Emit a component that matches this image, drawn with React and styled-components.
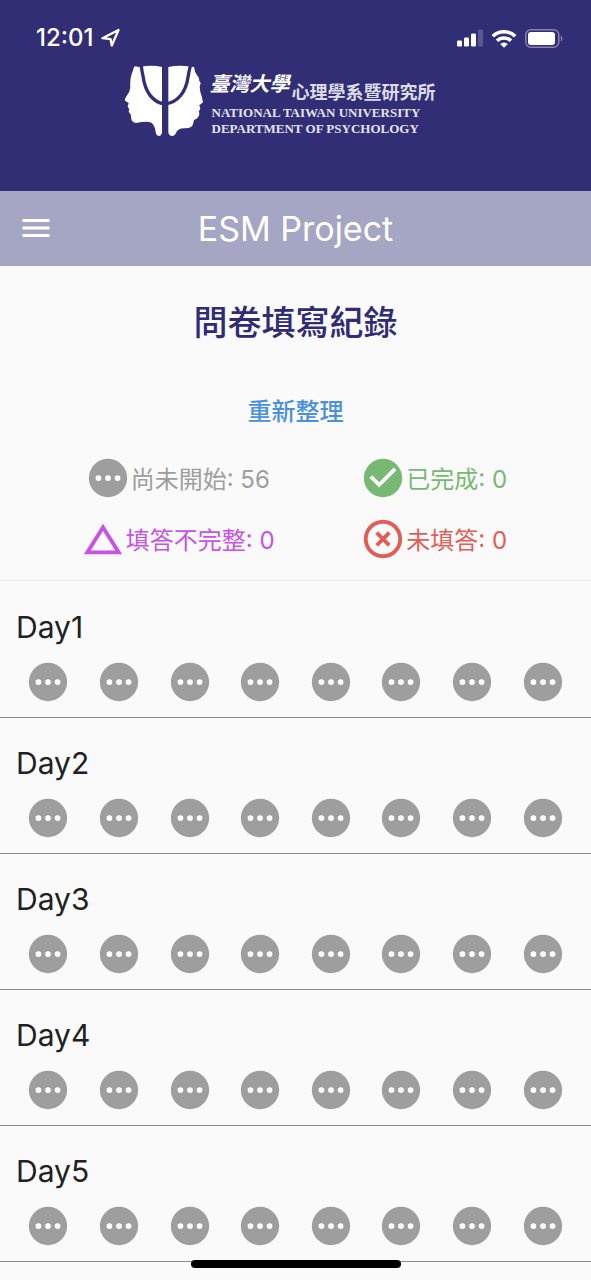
import React from "react";
import styled, { createGlobalStyle } from "styled-components";

const sans = `Inter, "Noto Sans CJK TC", sans-serif`;

const GlobalStyle = createGlobalStyle`
  *, *::before, *::after { box-sizing: border-box; }
  body { margin: 0; background: #fafafa; font-family: ${sans}; }
  h1, h2, h3, p, ul, dl { margin: 0; padding: 0; font-weight: 400; }
  svg { display: block; flex: none; }
`;

const Page = styled.div`
  min-height: 100vh;
  background: #fafafa;
`;

const Header = styled.header`
  height: 191px;
  padding-top: 20px;
  background: #312e75;
  color: #fff;
`;

const StatusBar = styled.div`
  display: flex;
  align-items: center;
  justify-content: space-between;
  height: 36px;
  padding: 0 28px 0 36px;
`;

const StatusGroup = styled.div`
  display: flex;
  align-items: center;
  gap: 8px;
`;

const Clock = styled.time`
  font-size: 24px;
  line-height: 28px;
  font-weight: 500;
`;

const Brand = styled.div`
  display: flex;
  justify-content: center;
  gap: 6px;
  padding: 9px 32px 0 0;
`;

const BrandText = styled.div`
  display: flex;
  flex-direction: column;
  white-space: nowrap;
`;

const BrandChinese = styled.div`
  display: flex;
  align-items: flex-end;
  gap: 2px;
  height: 40px;
`;

const BrandScript = styled.span`
  font-family: "Noto Sans CJK TC", sans-serif;
  font-size: 20px;
  line-height: 36px;
  font-style: italic;
  font-weight: 700;
  height: 40px;
`;

const BrandDept = styled.span`
  font-family: "Noto Sans CJK TC", sans-serif;
  font-size: 18px;
  line-height: 28px;
  font-weight: 700;
  color: #dddce9;
`;

const BrandLatin = styled.span`
  padding-left: 2px;
  font-family: "Liberation Serif", serif;
  font-size: 13px;
  line-height: 16px;
  font-weight: 700;
  color: #e4e3ee;
`;

const AppBar = styled.div`
  display: grid;
  grid-template-columns: 56px 1fr 56px;
  align-items: center;
  height: 75px;
  padding: 0 8px;
  background: #a5a6c4;
  color: #fff;
`;

const MenuButton = styled.button`
  display: grid;
  place-items: center;
  width: 56px;
  height: 56px;
  padding: 0;
  border: 0;
  background: none;
  color: inherit;
`;

const AppTitle = styled.h1`
  font-size: 34px;
  line-height: 40px;
  text-align: center;
`;

const Summary = styled.section`
  display: flex;
  flex-direction: column;
  align-items: center;
  padding-top: 32px;
  border-bottom: 1px solid #ebebeb;
`;

const Heading = styled.h2`
  font-size: 34px;
  line-height: 50px;
  font-weight: 500;
  color: #2f2b74;
`;

const RefreshButton = styled.button`
  margin-top: 46px;
  padding: 0;
  border: 0;
  background: none;
  font-family: ${sans};
  font-size: 24px;
  line-height: 36px;
  font-weight: 500;
  color: #4a90dc;
`;

const Legend = styled.ul`
  display: grid;
  grid-template-columns: 1fr 1fr;
  row-gap: 15px;
  width: 100%;
  padding: 25px 29px 18px 49px;
  list-style: none;
`;

const LegendItem = styled.li`
  display: flex;
  align-items: center;
  justify-content: center;
  height: 46px;
  font-size: 24px;
  font-weight: 400;
  line-height: 36px;
  white-space: nowrap;
  color: ${(p) => p.$color};
`;

const LegendText = styled.span`
  padding-top: 3px;
`;

const DayList = styled.main`
  padding-top: 1px;
`;

const DayRow = styled.section`
  height: 136px;
  padding-top: 25px;
  border-bottom: 1px solid #8c8c8c;
`;

const DayName = styled.h3`
  padding-left: 16px;
  font-size: 30px;
  line-height: 40px;
  color: #212121;
`;

const Slots = styled.div`
  display: grid;
  grid-template-columns: repeat(8, 1fr);
  justify-items: center;
  padding: 12px 13px 0;
`;

const HomeIndicator = styled.div`
  position: fixed;
  left: 50%;
  bottom: 12px;
  width: 210px;
  height: 8px;
  margin-left: -105px;
  border-radius: 4px;
  background: #000;
`;

const Icon = ({ children }) => (
  <svg width="46" height="46" viewBox="0 0 24 24" fill="currentColor" aria-hidden="true">
    {children}
  </svg>
);

const PendingIcon = ({ color = "#9e9e9e" }) => (
  <Icon>
    <circle cx="12" cy="12" r="10" fill={color} />
    <g fill="#fff">
      <circle cx="7" cy="12" r="1.5" />
      <circle cx="12" cy="12" r="1.5" />
      <circle cx="17" cy="12" r="1.5" />
    </g>
  </Icon>
);

const DoneIcon = () => (
  <Icon>
    <circle cx="12" cy="12" r="10" />
    <path d="M10 17l-5-5 1.41-1.41L10 14.17l7.59-7.59L19 8z" fill="#fff" />
  </Icon>
);

const PartialIcon = () => (
  <Icon>
    <path d="M12 7.77 18.39 18H5.61L12 7.77M12 4 2 20h20L12 4z" />
  </Icon>
);

const MissedIcon = () => (
  <Icon>
    <path d="M14.59 8 12 10.59 9.41 8 8 9.41 10.59 12 8 14.59 9.41 16 12 13.41 14.59 16 16 14.59 13.41 12 16 9.41 14.59 8zM12 2C6.47 2 2 6.47 2 12s4.47 10 10 10 10-4.47 10-10S17.53 2 12 2zm0 18c-4.41 0-8-3.59-8-8s3.59-8 8-8 8 3.59 8 8-3.59 8-8 8z" />
  </Icon>
);

const MenuIcon = () => (
  <svg width="28" height="20" viewBox="0 0 28 20" fill="currentColor" aria-hidden="true">
    <path d="M0.500 0h27v3h-27zM0.500 7.500h27v3h-27zM0.500 15h27v3h-27z" />
  </svg>
);

const LocationIcon = () => (
  <svg width="20" height="20" viewBox="0 0 20 20" aria-hidden="true">
    <path d="M1.500 10.200 17.500 2 10.800 17.500 9.600 11.200z" fill="none" stroke="#fff" strokeWidth="2.300" strokeLinejoin="round" />
  </svg>
);

const SignalIcon = () => (
  <svg width="26" height="18" viewBox="0 0 26 18" fill="#fff" aria-hidden="true">
    <rect x="0" y="11.500" width="5" height="6" rx="1.300" />
    <rect x="7" y="8.500" width="5" height="9" rx="1.300" />
    <rect x="14" y="4.500" width="5" height="13" rx="1.300" />
    <rect x="21" y="0.500" width="5" height="17" rx="1.300" opacity="0.200" />
  </svg>
);

const WifiIcon = () => (
  <svg width="26" height="19" viewBox="0 0 26 19" aria-hidden="true">
    <g fill="none" stroke="#fff" strokeWidth="3.600">
      <path d="M1.800 7.300a16 16 0 0 1 22.400 0" />
      <path d="M6 11.800a10 10 0 0 1 14 0" />
    </g>
    <path d="M13 18.800 9.200 15a5.300 5.300 0 0 1 7.600 0z" fill="#fff" />
  </svg>
);

const BatteryIcon = () => (
  <svg width="38" height="19" viewBox="0 0 38 19" aria-hidden="true">
    <rect x="0.800" y="0.800" width="33" height="17.400" rx="5" fill="none" stroke="#8583ad" strokeWidth="1.500" />
    <rect x="3" y="3" width="27" height="13" rx="3" fill="#fff" />
    <path d="M35.800 6.500c2.200.8 2.200 5.200 0 6z" fill="#8583ad" />
  </svg>
);

const HeadsLogo = () => (
  <svg width="80" height="72" viewBox="40 45 240 216" role="img" aria-label="Department emblem">
    <path
      fill="#fff"
      d="M70 51Q75 47 82 51L90 50Q125 44 154 51V246Q153 258 144 258Q136 257 135 246Q133 226 122 218Q110 212 76 219Q64 217 62 207L60 193L54 185L56 178L51 170L54 159L43 152Q41 147 50 134Q57 125 59 113Q57 88 63 72Q67 62 70 51Z"
    />
    <path
      fill="#fff"
      d="M173 51Q205 44 240 50L250 51Q252 68 260 77Q267 84 265 91L270 99L267 110Q268 126 273 139L277 157L266 166L269 176L265 183L266 192Q264 206 250 210L247 223Q243 236 222 235Q200 235 195 251Q190 259 183 258Q174 257 173 247Z"
    />
    <path
      fill="none"
      stroke="#312e75"
      strokeWidth="10"
      d="M91 44Q94 64 97 78C103 125 126 158 163 162C202 158 226 125 232 82Q234 68 240 44"
    />
  </svg>
);

const legend = [
  { label: "尚未開始", count: 56, color: "#9e9e9e", Glyph: PendingIcon },
  { label: "已完成", count: 0, color: "#77b972", Glyph: DoneIcon },
  { label: "填答不完整", count: 0, color: "#c653e6", Glyph: PartialIcon },
  { label: "未填答", count: 0, color: "#e35d57", Glyph: MissedIcon },
];

const days = [1, 2, 3, 4, 5];
const slots = [1, 2, 3, 4, 5, 6, 7, 8];

export default function App() {
  return (
    <Page>
      <GlobalStyle />
      <Header>
        <StatusBar>
          <StatusGroup>
            <Clock>12:01</Clock>
            <LocationIcon />
          </StatusGroup>
          <StatusGroup>
            <SignalIcon />
            <WifiIcon />
            <BatteryIcon />
          </StatusGroup>
        </StatusBar>
        <Brand>
          <HeadsLogo />
          <BrandText lang="zh-Hant">
            <BrandChinese>
              <BrandScript>臺灣大學</BrandScript>
              <BrandDept>心理學系暨研究所</BrandDept>
            </BrandChinese>
            <BrandLatin>NATIONAL TAIWAN UNIVERSITY</BrandLatin>
            <BrandLatin>DEPARTMENT OF PSYCHOLOGY</BrandLatin>
          </BrandText>
        </Brand>
      </Header>
      <AppBar>
        <MenuButton type="button" aria-label="Menu">
          <MenuIcon />
        </MenuButton>
        <AppTitle>ESM Project</AppTitle>
      </AppBar>
      <Summary lang="zh-Hant">
        <Heading>問卷填寫紀錄</Heading>
        <RefreshButton type="button">重新整理</RefreshButton>
        <Legend>
          {legend.map(({ label, count, color, Glyph }) => (
            <LegendItem key={label} $color={color}>
              <Glyph />
              <LegendText>
                {label}: {count}
              </LegendText>
            </LegendItem>
          ))}
        </Legend>
      </Summary>
      <DayList>
        {days.map((day) => (
          <DayRow key={day}>
            <DayName>Day{day}</DayName>
            <Slots>
              {slots.map((slot) => (
                <PendingIcon key={slot} />
              ))}
            </Slots>
          </DayRow>
        ))}
      </DayList>
      <HomeIndicator />
    </Page>
  );
}
